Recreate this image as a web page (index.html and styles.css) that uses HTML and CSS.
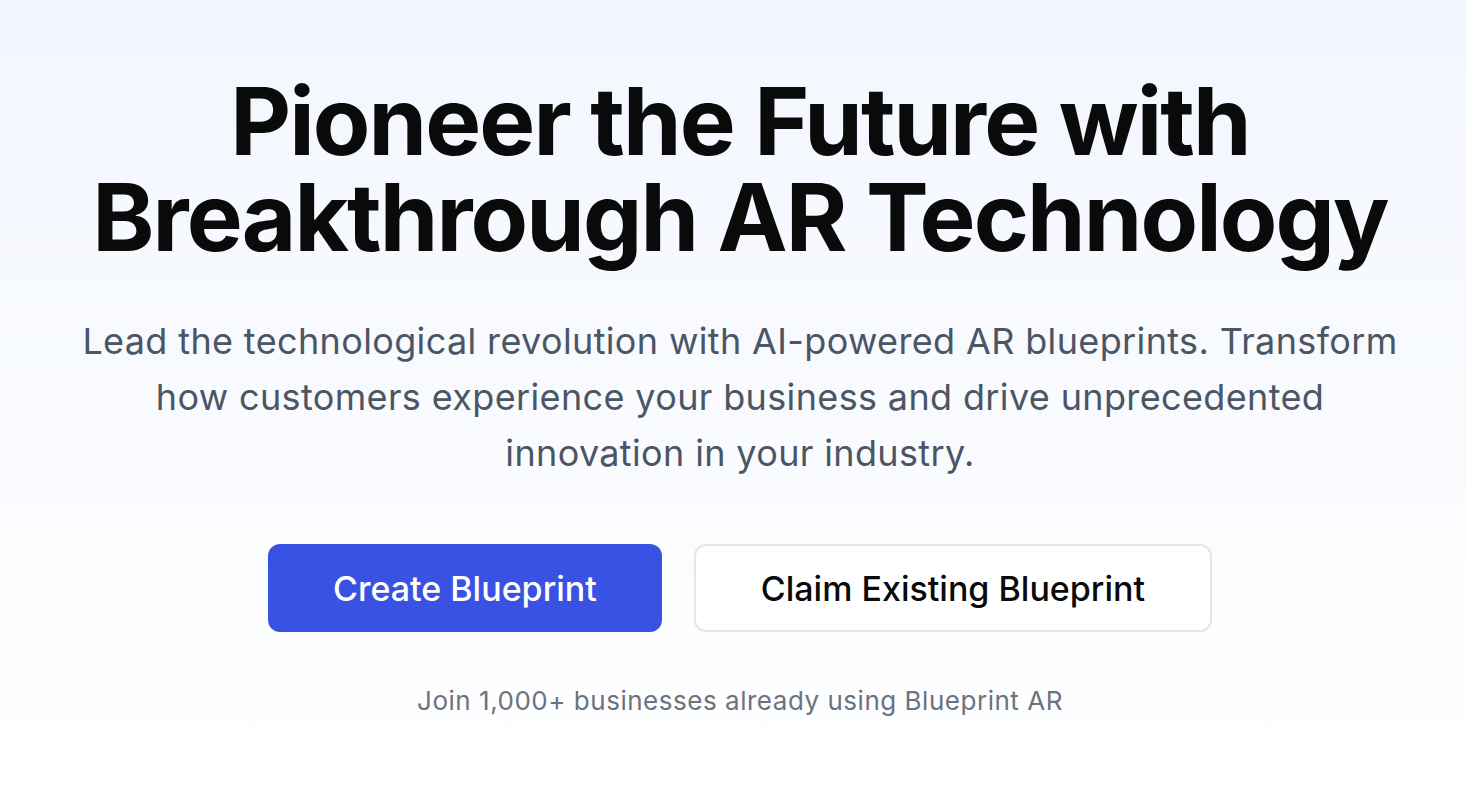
FILE: index.html
```html
<!DOCTYPE html>
<html lang="en">
<head>
<meta charset="utf-8">
<title>Blueprint AR</title>
<link rel="stylesheet" href="styles.css">
</head>
<body>
<main class="hero">
  <h1 class="hero-title">Pioneer the Future with<br>Breakthrough AR Technology</h1>
  <p class="hero-lead">Lead the technological revolution with AI-powered AR blueprints. Transform how customers experience your business and drive unprecedented innovation in your industry.</p>
  <div class="hero-actions">
    <a class="btn btn-primary" href="#">Create Blueprint</a>
    <a class="btn btn-secondary" href="#">Claim Existing Blueprint</a>
  </div>
  <p class="hero-note">Join 1,000+ businesses already using Blueprint AR</p>
</main>
</body>
</html>
```
FILE: styles.css
```css
* { box-sizing: border-box; }
html, body { margin: 0; padding: 0; }
body {
  min-height: 100vh;
  background: linear-gradient(180deg, #f2f6fe 0%, #ffffff 100%);
  font-family: "Inter", "Liberation Sans", sans-serif;
  color: #0a0a0a;
}
.hero {
  display: flex;
  flex-direction: column;
  align-items: center;
  text-align: center;
  padding: 73px 24px 0 38px;
}
.hero-title {
  margin: 0;
  font-size: 94px;
  line-height: 96px;
  font-weight: 700;
  letter-spacing: -0.02em;
  color: #0a0a0a;
}
.hero-lead {
  margin: 48px 0 0;
  max-width: 1334px;
  font-size: 36px;
  line-height: 56px;
  letter-spacing: 0.01em;
  color: #4b5563;
}
.hero-actions {
  display: flex;
  gap: 32px;
  margin-top: 63px;
}
.btn {
  display: inline-flex;
  align-items: center;
  justify-content: center;
  height: 88px;
  padding: 0 65px;
  border-radius: 12px;
  font-size: 34px;
  font-weight: 500;
  text-decoration: none;
}
.btn-primary {
  background: #3a52e3;
  color: #ffffff;
}
.btn-secondary {
  background: #ffffff;
  color: #0a0a0a;
  border: 2px solid #e5e5e5;
}
.hero-note {
  margin: 53px 0 0;
  font-size: 26px;
  line-height: 32px;
  letter-spacing: 0.02em;
  color: #6b7280;
}
```
